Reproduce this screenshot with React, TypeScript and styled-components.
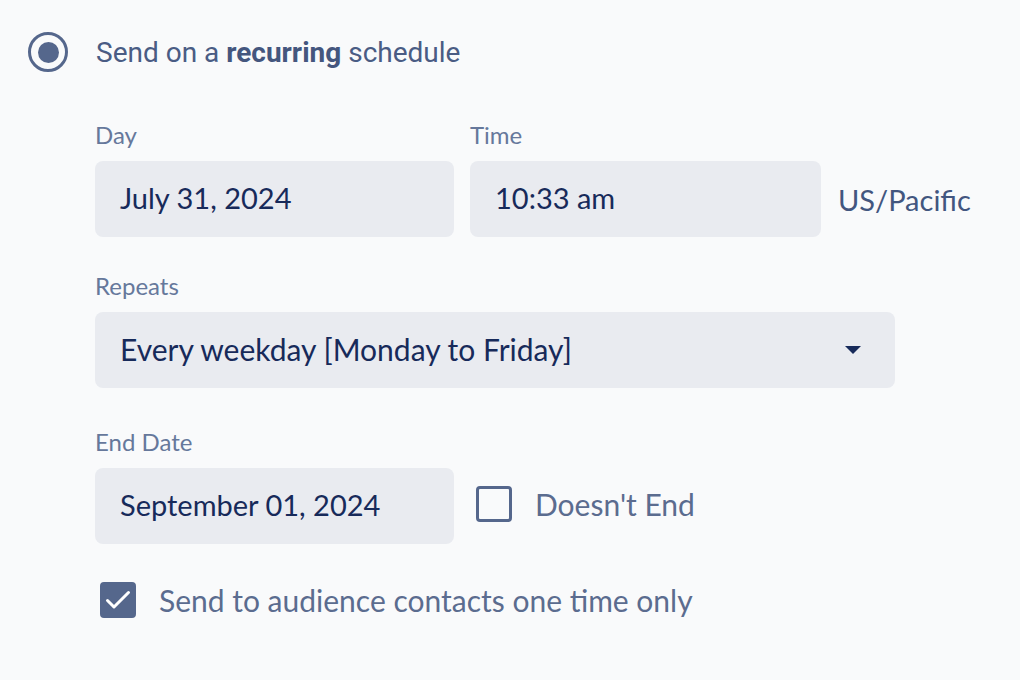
import React from 'react';
import styled, { createGlobalStyle } from 'styled-components';

const colors = {
  page: '#f9fafb',
  field: '#e9ebf0',
  ink: '#172a5a',
  label: '#66789b',
  muted: '#5b6c8f',
  accent: '#55678c',
};

const GlobalStyle = createGlobalStyle`
  html, body {
    margin: 0;
    padding: 0;
    background: ${colors.page};
  }
  body {
    font-family: Lato, 'Noto Sans', sans-serif;
  }
`;

const Page = styled.div`
  width: 1020px;
  height: 680px;
  box-sizing: border-box;
  padding: 32px 0 0 28px;
  background: ${colors.page};
`;

const Header = styled.div`
  display: flex;
  align-items: center;
  gap: 28px;
  height: 40px;
`;

const Radio = styled.span`
  width: 40px;
  height: 40px;
  box-sizing: border-box;
  border: 3.5px solid ${colors.accent};
  border-radius: 50%;
  display: flex;
  align-items: center;
  justify-content: center;
  &::after {
    content: '';
    width: 21px;
    height: 21px;
    border-radius: 50%;
    background: ${colors.accent};
  }
`;

const Title = styled.span`
  font-family: Roboto, sans-serif;
  font-size: 28px;
  color: #4a5c84;
  b {
    font-weight: 700;
    color: #44567e;
  }
`;

const Form = styled.div`
  display: flex;
  flex-direction: column;
  padding-left: 67px;
  margin-top: 49px;
`;

const Row = styled.div<{ top?: number }>`
  display: flex;
  align-items: flex-end;
  gap: 16px;
  margin-top: ${p => p.top ?? 0}px;
`;

const Field = styled.div<{ width: number; top?: number }>`
  display: flex;
  flex-direction: column;
  width: ${p => p.width}px;
  margin-top: ${p => p.top ?? 0}px;
`;

const Label = styled.label`
  font-size: 24px;
  line-height: 28px;
  color: ${colors.label};
  margin-bottom: 12px;
`;

const Box = styled.div<{ size?: number }>`
  height: 76px;
  box-sizing: border-box;
  border-radius: 8px;
  background: ${colors.field};
  display: flex;
  align-items: center;
  justify-content: space-between;
  padding: 0 34px 3px 25px;
  font-size: ${p => p.size ?? 29}px;
  color: ${colors.ink};
`;

const Zone = styled.span`
  font-size: 29px;
  color: #42567f;
  height: 76px;
  display: flex;
  align-items: center;
  margin-left: 1px;
`;

const Caret = styled.span`
  width: 0;
  height: 0;
  margin-top: 3px;
  border-left: 8px solid transparent;
  border-right: 8px solid transparent;
  border-top: 8px solid ${colors.ink};
`;

const Check = styled.span<{ checked?: boolean }>`
  width: 36px;
  height: 36px;
  box-sizing: border-box;
  border-radius: 4px;
  border: 3px solid ${colors.accent};
  background: ${p => (p.checked ? colors.accent : 'transparent')};
  display: flex;
  align-items: center;
  justify-content: center;
  flex-shrink: 0;
`;

const Option = styled.div`
  display: flex;
  align-items: center;
  gap: 23px;
  height: 76px;
  padding-bottom: 5px;
  box-sizing: border-box;
  font-size: 30px;
  color: ${colors.muted};
`;

const OneTime = styled(Option)`
  height: auto;
  padding-bottom: 0;
  margin-left: 5px;
  margin-top: 38px;
`;

const App: React.FC = () => {
  return (
    <>
      <GlobalStyle />
      <Page>
        <Header>
          <Radio />
          <Title>
            Send on a <b>recurring</b> schedule
          </Title>
        </Header>
        <Form>
          <Row>
            <Field width={359}>
              <Label>Day</Label>
              <Box>July 31, 2024</Box>
            </Field>
            <Field width={351}>
              <Label>Time</Label>
              <Box>10:33 am</Box>
            </Field>
            <Zone>US/Pacific</Zone>
          </Row>
          <Field width={800} top={35}>
            <Label>Repeats</Label>
            <Box size={30}>
              Every weekday [Monday to Friday]
              <Caret />
            </Box>
          </Field>
          <Row top={40}>
            <Field width={359}>
              <Label>End Date</Label>
              <Box>September 01, 2024</Box>
            </Field>
            <Option style={{ marginLeft: 6 }}>
              <Check />
              Doesn't End
            </Option>
          </Row>
          <OneTime>
            <Check checked>
              <svg width="26" height="20" viewBox="0 0 26 20">
                <path d="M2.5 10.5 L9 17 L23.5 2.5" fill="none" stroke="#fff" strokeWidth="3" strokeLinecap="round" strokeLinejoin="round" />
              </svg>
            </Check>
            Send to audience contacts one time only
          </OneTime>
        </Form>
      </Page>
    </>
  );
};

export default App;
